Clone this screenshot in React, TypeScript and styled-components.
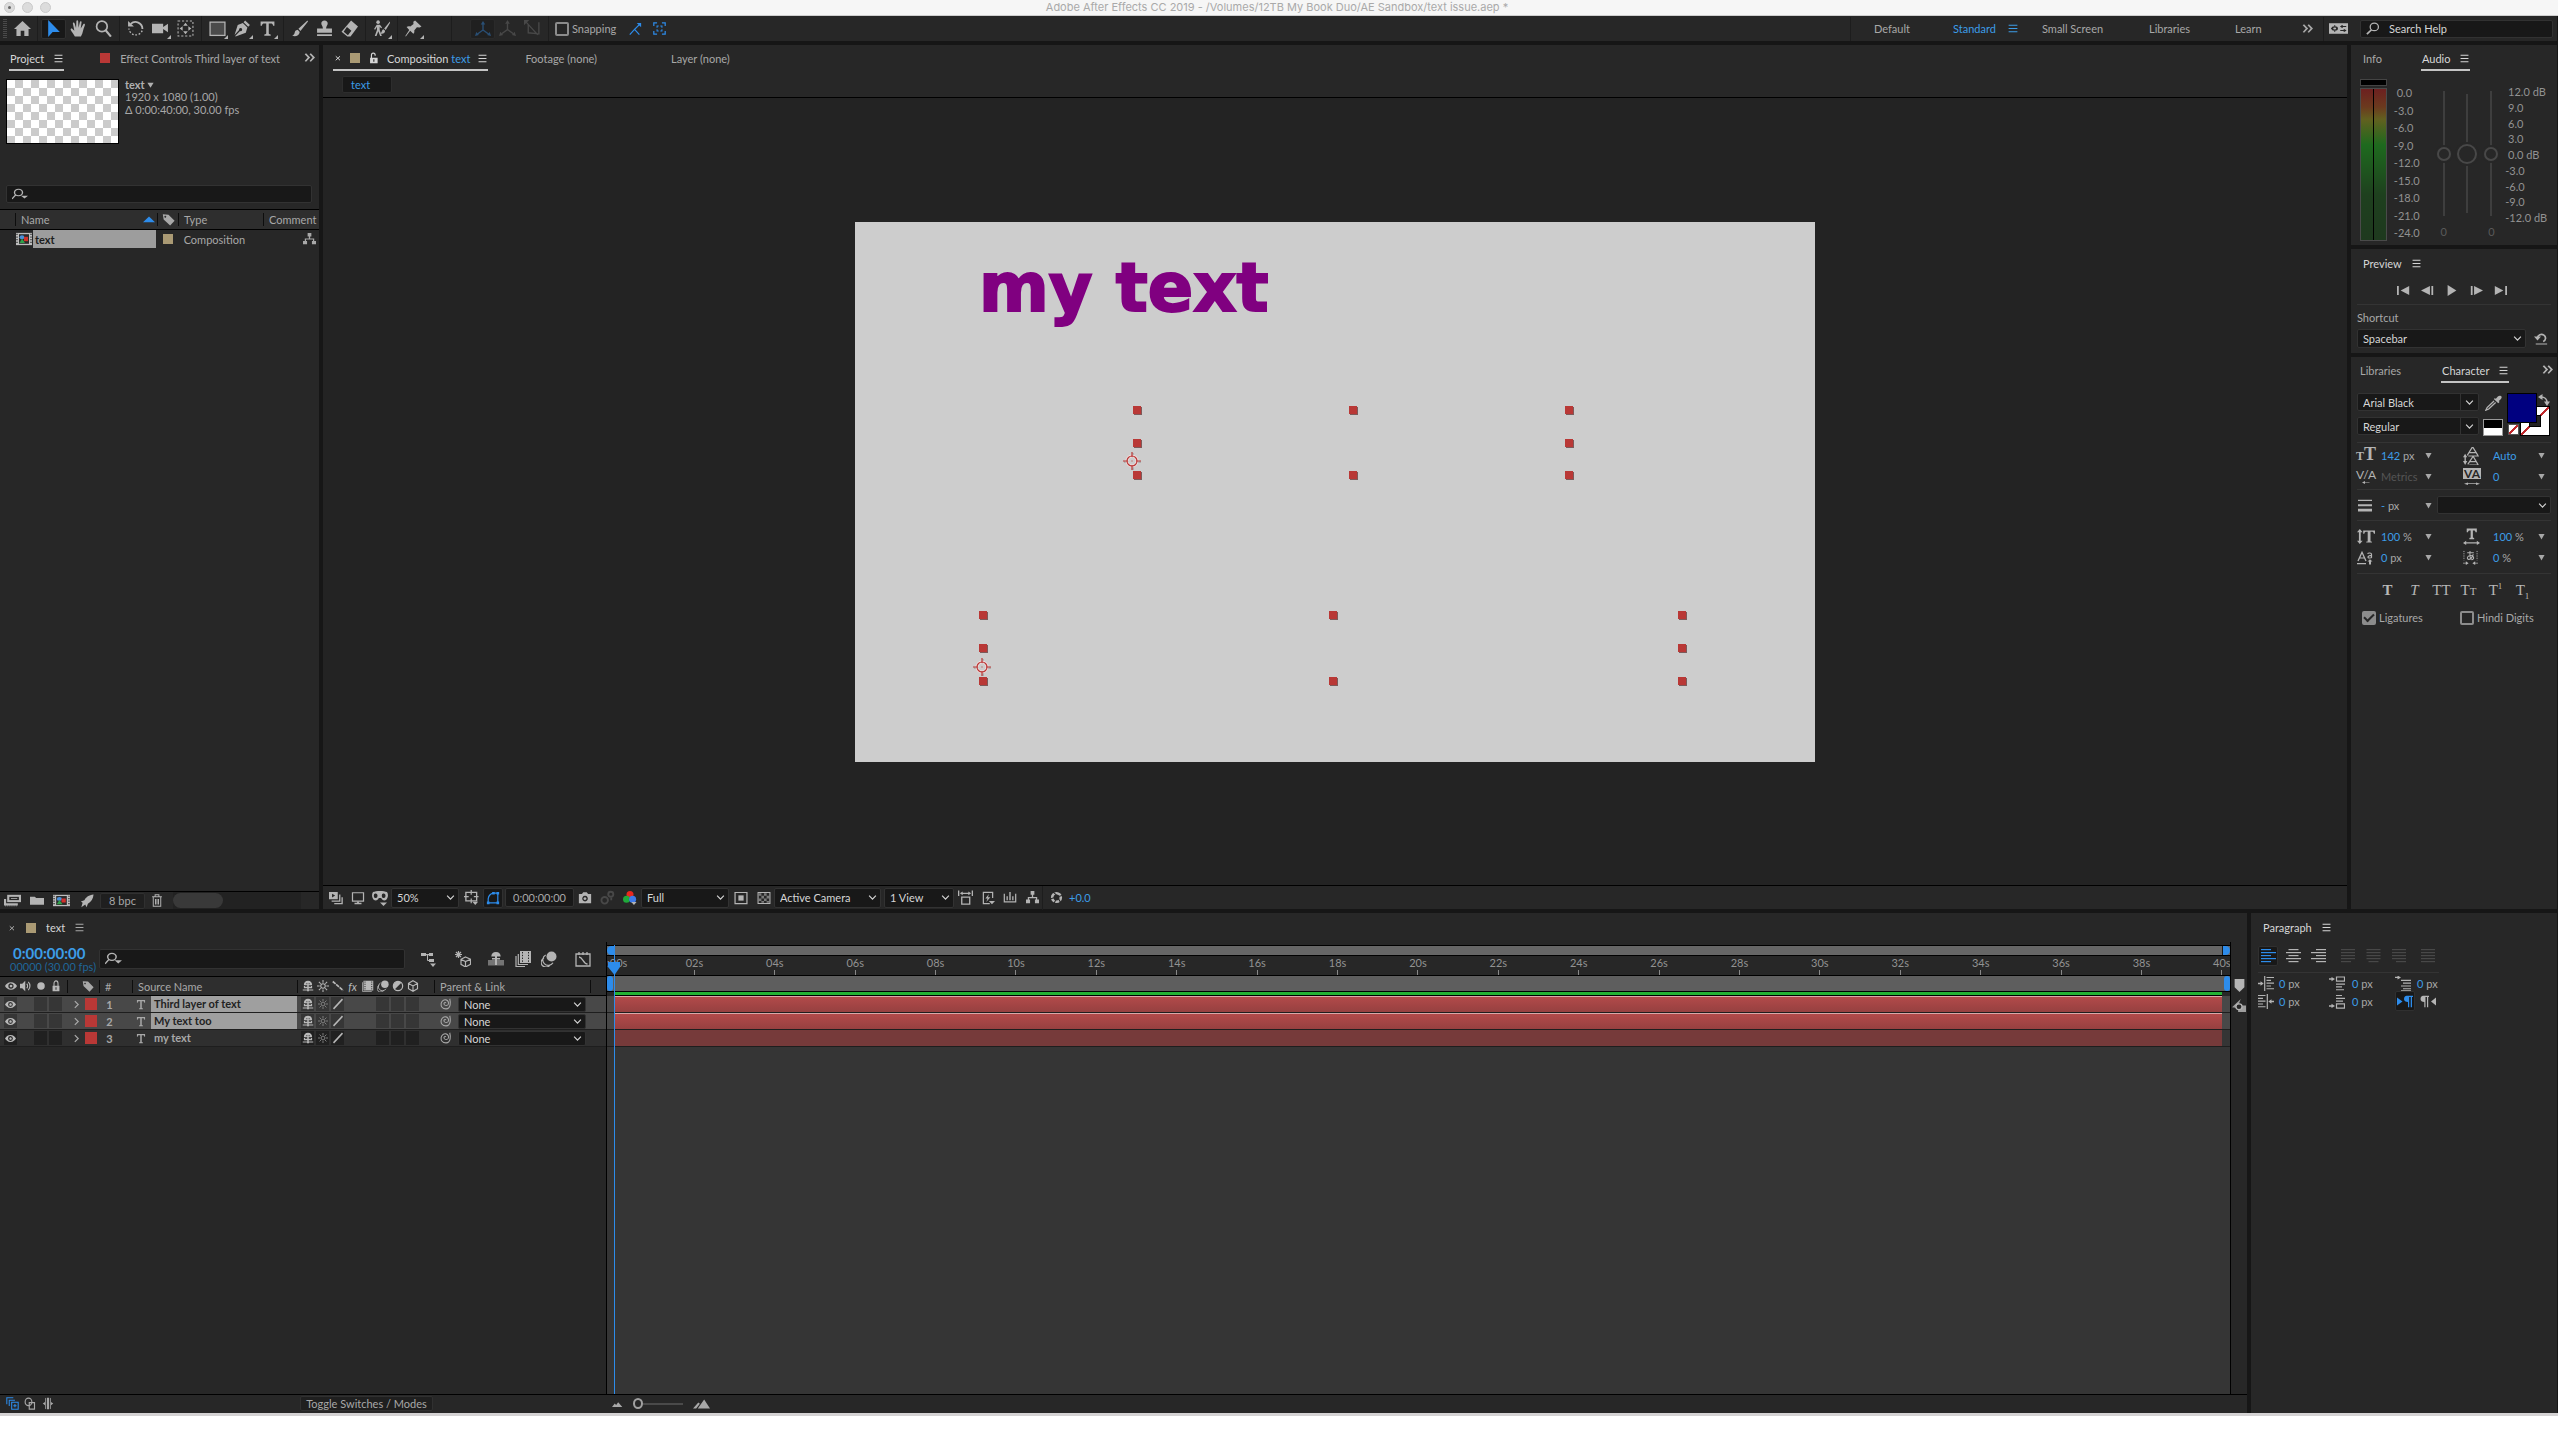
import React, { ReactNode } from 'react';
import styled, { createGlobalStyle, css } from 'styled-components';

/* ---------- tokens ---------- */
const c = {
  panel: '#272727',
  gap: '#161616',
  well: '#181818',
  edge: '#323232',
  text: '#a8a8a8',
  bright: '#d6d6d6',
  blue: '#2d8ceb',
  blueText: '#3c9de8',
  red: '#b93836',
  tan: '#aa9a74',
};

const Global = createGlobalStyle`
  * { box-sizing: border-box; }
  body { margin: 0; background: #fff; }
  button, input, select { font: inherit; color: inherit; margin: 0; padding: 0; border: 0; background: none; }
  body, button, input, select { font-family: Lato, "Liberation Sans", sans-serif; font-size: 11px; line-height: 13px; }
`;

/* ---------- icons, drawn on a 16 unit grid ---------- */
const stroke = { fill: 'none', stroke: 'currentColor' };
const icons: Record<string, ReactNode> = {
  home: <path d="M8 1 0 8.5h2.3V15h4V10h3.4v5h4V8.5H16z" />,
  arrow: <path d="M3 0v16l4.2-4.6H14z" />,
  hand: <path d="M4.6 15.5C3.4 13 1.600 11 .7 9.300c-.5-1 .7-1.800 1.600-.9l1.800 1.800L2.700 3.400c-.2-1.200 1.300-1.500 1.600-.4l1.400 4.600L6 1.200c0-1.200 1.600-1.200 1.700 0l.3 6.200 1.300-5.600c.3-1.100 1.800-.8 1.600.4L10.100 8l2.400-3.900c.7-1 2-.2 1.500.9-1 2.300-1.500 4.400-2.100 6.600-.3 1.500-1.100 2.700-1.600 3.900z" />,
  zoom: <g {...stroke} strokeWidth="1.6"><circle cx="6.5" cy="6" r="5" /><path d="m10 9.600 5 6" strokeWidth="2" /></g>,
  rotate: <g {...stroke} strokeWidth="1.7"><path d="M3.500 3.700A6.500 6.500 0 0 1 14.500 8.500" /><path d="M14.300 10A6.500 6.500 0 0 1 1.800 8" strokeDasharray="1.6 1.6" strokeWidth="1.3" /><path d="M1 1v5h5.500z" fill="currentColor" stroke="none" /></g>,
  camera: <path d="M0 3.500h10.500v3L15 3.500v8l-4.500-3v4H0z" />,
  behind: <g><rect x="1" y="1" width="14" height="14" {...stroke} strokeDasharray="2 1.7" /><path d="M8 2.500 5.800 5.300h4.400zM8 13.500l-2.200-2.800h4.400zM2.500 8l2.800-2.200v4.400zM13.500 8l-2.800-2.200v4.400z" /></g>,
  rect: <rect x="1" y="2" width="14" height="12.5" fill="#4b4b4b" stroke="currentColor" strokeWidth="1.2" />,
  pen: <path d="m10.500.5 4.500 4.300-1.600 1.500L9 2zM8.300 2.900l4.300 4.200-1.500 5L1.500 15.500l-.4-.4 4.600-4.700a1.500 1.500 0 1 0-.9-.9L.5 14l3-9.200z" />,
  type: <path d="M1.500 1.500h13v4h-1.200c-.3-1.700-.8-2.200-2.500-2.200H9.200v9c0 1 .4 1.300 1.800 1.300v1.200H5v-1.200c1.400 0 1.800-.3 1.800-1.300v-9H5.200c-1.700 0-2.200.5-2.500 2.200H1.500z" />,
  brush: <path d="M15.500.5 7 8.300l1.900 2L16 1.500zM6.300 9.200c-2 .2-2.600 1.600-2.900 3-.2 1.100-.9 2-2.400 2.500 2.600 1.100 6.600.6 7.200-3.500z" />,
  stamp: <path d="M8 .5c-2 0-3 1.300-3 2.800 0 1.600 1.500 2.400 1.500 4.700H1v4h14V8H9.500c0-2.300 1.500-3.100 1.500-4.700C11 1.800 10 .5 8 .5zM1 13.500h14V15H1z" />,
  eraser: <path d="M9.500.5 16 6l-7 9.500H6L.5 11zM2.500 11l4 3.300L9.800 10 5.600 6.700z" fillRule="evenodd" />,
  roto: <g><circle cx="4.8" cy="2" r="1.7" /><path d="M1 8.500 3.500 4.500h3L8.500 7l-.8.8L6.300 6.300v3l2 5.700H6.700L5 10.500 3.300 15H1.700l2-5.700v-3L2 9.200zM16 1.500 10.500 8l1.500 1.400 4.300-7zM9.700 8.700c-1.600.5-1 2.800-2.700 4 2 .6 4.400 0 4.400-2.500z" /></g>,
  pin: <path d="m9.500.5 6 5.700-1.700.8-2.600-.2-2.500 3c.3 1.300 0 2.400-.9 3.200L4.900 10.200.8 15.500l-.5-.5L4 9.300 1.500 6.700c.9-.8 2.300-1 3.500-.5l3-2.500-.2-2z" />,
  axis: <g {...stroke} strokeWidth="1.3"><path d="M8 3v6L2.500 13M8 9l5.500 4" /><path d="M8 0 5.800 3.500h4.400zM0 15l1.300-4 2.500 3zM16 15l-1.300-4-2.500 3z" fill="currentColor" stroke="none" /></g>,
  viewAxis: <g {...stroke} strokeWidth="1.3"><path d="M2 2l11 12M14 2v11L4 12V4" /><path d="M0 0h5L0 5z" fill="currentColor" stroke="none" /></g>,
  snapArrow: <g {...stroke} strokeWidth="1.4"><path d="M2 14.500 7.500 8.500l5.500 6M7.500 8.500 14 2" /><path d="M10 1h5v5z" fill="currentColor" stroke="none" /></g>,
  snapBox: <g {...stroke} strokeWidth="1.5"><path d="M1 5V1h4M11 1h4v4M15 11v4h-4M5 15H1v-4" /><path d="M5 7V5h2M9 5h2v2M11 9v2H9M7 11H5V9" strokeWidth="1.3" /></g>,
  more: <path d="m1 2 2-1.500L9 8l-6 7.500L1 14l4.500-6zM8 2l2-1.500L16 8l-6 7.500L8 14l4.500-6z" />,
  menu: <path d="M1 1.500h14v1.700H1zM1 7.200h14v1.700H1zM1 13h14v1.700H1z" />,
  close: <path d="M3.500 4.500 12 12.500M12 4.500 3.500 12.500" {...stroke} strokeWidth="2" />,
  unlock: <g><path d="M5 8V4.200a2.700 2.700 0 0 1 5.400 0V5" {...stroke} strokeWidth="1.7" /><path d="M3 7.500h11V15H3zm4.700 2v3.500h1.600V9.500z" fillRule="evenodd" /></g>,
  lock: <g><path d="M4.800 8V4.500a3.200 3.200 0 0 1 6.400 0V8" {...stroke} strokeWidth="1.7" /><path d="M2.500 7.500h11V15h-11zm4.700 2v3.500h1.600V9.500z" fillRule="evenodd" /></g>,
  search: <g {...stroke} strokeWidth="1.5"><circle cx="9.5" cy="6" r="4.7" /><path d="M6.300 9.500 1 15" strokeWidth="2" /></g>,
  searchMenu: <g {...stroke} strokeWidth="1.4"><circle cx="6.5" cy="5.5" r="4" /><path d="M3.700 8.500 0 13.500" /><path d="M9 9.500h7L12.500 13z" fill="currentColor" stroke="none" /></g>,
  sortUp: <path d="M0 12 8 3.500 16 12z" fill={c.blue} />,
  tag: <path d="M1 1.500 8 2l7.500 7.500L10 15.500 2 8zm3 2a1.100 1.100 0 1 0 .1 0z" fillRule="evenodd" />,
  flow: <path d="M5.700 0h4.600v4.700H8.800v2.600h5v3.200H16V15h-5v-4.500h1.300V8.800H3.700v1.700H5V15H0v-4.500h2.200V7.300h5V4.700H5.700z" />,
  compItem: <g><path d="M0 1h16v14H0z" fill="#bdbdbd" /><path d="M3 2.500h10v11H3z" fill="#2a2a2a" /><path d="M1 2v12M15 2v12" stroke="#333" strokeWidth="1.3" strokeDasharray="1.5 1.5" /><circle cx="6" cy="6" r="2.4" fill="#4a90d9" /><path d="M8 5.500h4v5H8z" fill="#d0322c" /><path d="m6 7.500 3 5H3.500z" fill="#31a04a" /></g>,
  footageItem: <g><path d="M3 1h13v9H3z" /><path d="M5 3.500h9v4H5z" fill="#272727" /><path d="M6.500 5h6v1h-6z" /><path d="M0 6h2v5.500h11V14H0z" /><path d="M1 14.500h11" stroke="currentColor" strokeDasharray="1 1" /></g>,
  folder: <path d="M0 2.500h5.500l1.500 2h9V14H0z" />,
  rocket: <path d="M15.500.5C10 1 7 3.500 5 7L1 8.500l2 1.500-1.500 5L6 12l1.500 3L9 11c4-2.500 6-5.500 6.500-10.500zM3 13l-1.700 2.500" />,
  trash: <g {...stroke} strokeWidth="1.3"><path d="M1.500 3.500h13M5.500 3V1h5v2M3 4v11h10V4M6 6v7M8 6v7M10 6v7" /></g>,
  alwaysPreview: <g><path d="M0 1h10v8.500H0zm3.500 2v4.500L7 5.200z" fillRule="evenodd" /><path d="M12.300 4v7.500H3M15 7v7.500H6" {...stroke} strokeWidth="1.5" /></g>,
  monitor: <g><path d="M1.700 2h12.600v9.500H1.700z" {...stroke} strokeWidth="1.4" /><path d="M7 12h2v1.500h3V15H4v-1.500h3z" /></g>,
  goggles: <g><path d="M1 2c3-1.500 11-1.500 14 0 1.500 2 1.300 6-1 8-2 1.200-4 0-4.800-2H6.800C6 10 4 11.200 2 10-.3 8-.5 4 1 2zm3 1.500A1.900 2.300 0 1 0 4.100 8 1.900 2.300 0 0 0 4 3.500zm8 0A1.900 2.300 0 1 0 12.100 8 1.900 2.300 0 0 0 12 3.500z" fillRule="evenodd" /><path d="M8 12.500h7L11.500 16z" /></g>,
  roi: <g><path d="M2 2.500h11.500v9H2z" {...stroke} strokeWidth="1.4" /><path d="M7.700 0v5M7.700 9v5M0 7h5M10.500 7h5" {...stroke} strokeWidth="1.3" /><path d="M9 12.500h6L12 16z" /></g>,
  mask: <g><path d="M2.500 13.500V9C3 5 5.500 3 8.500 2.500h5v11z" {...stroke} strokeWidth="1.4" /><path d="M12 1h3v3h-3zM12 12h3v3h-3zM1 12h3v3H1zM7 1h3v3H7z" /></g>,
  snapshot: <path d="M1 3.500h3.500L6 1.500h4l1.500 2H15V14H1zm7 2a3.200 3.200 0 1 0 .1 0zm0 1.500a1.700 1.700 0 1 1-.1 0z" fillRule="evenodd" />,
  showSnap: <g {...stroke} strokeWidth="2"><circle cx="5" cy="11" r="3.5" /><circle cx="11.5" cy="4.5" r="2.7" /><path d="M12 8v3" /></g>,
  rgb: <g><circle cx="8" cy="4" r="4" fill="#e8281e" /><circle cx="4" cy="9.5" r="4" fill="#1fa93a" /><circle cx="11" cy="9.5" r="4" fill="#3f7bea" /><path d="M9.500 12.500h6L12.500 16z" /></g>,
  roiBox: <g><path d="M1.200 1.700h13.600v12.600H1.200z" {...stroke} strokeWidth="1.4" /><path d="M5 5h6v6H5z" /></g>,
  grid: <g><path d="M1.200 1.700h13.600v12.600H1.200z" {...stroke} strokeWidth="1.2" /><path d="M2 2.500h3v3H2zM8 2.500h3v3H8zM5 5.500h3v3H5zM11 5.500h3v3h-3zM2 8.500h3v3H2zM8 8.500h3v3H8zM5 11.500h3v2H5zM11 11.500h3v2h-3z" opacity=".6" /></g>,
  pixelAspect: <g><path d="M4 7.500h8.500V15H4z" {...stroke} strokeWidth="1.4" /><path d="M0 .5h1.400v6H0zM14.600.5H16v6h-1.400zM2 3.500 5 1.500v1.300h6V1.500l3 2-3 2V4.200H5v1.300z" /></g>,
  fastPreview: <g><path d="M10 14.500H2.700v-13h10.600V8" {...stroke} strokeWidth="1.4" /><path d="m9 3.500-4 5h2.500L6 12.500l4.700-5.400H8z" /><path d="M9 11.500h7L12.500 15z" /></g>,
  timelineBtn: <g><path d="M1.500 3v9.500h13V3" {...stroke} strokeWidth="1.4" /><path d="M4 6h1.500v4.500H4zM7.200 1h1.600v9.500H7.200zM10.500 6H12v4.500h-1.500z" /></g>,
  aperture: <g><circle cx="8" cy="8" r="5.3" {...stroke} strokeWidth="3.2" /><path d="M4 1.500 8 5M14.800 5.500 9.500 7M13 14l-2.500-4.500M5 15l2-4M1 9.500l5-1.500" stroke="#272727" strokeWidth="1.3" /></g>,
  workspace: <g><path d="M0 1.500h16v13H0z" /><circle cx="4.8" cy="8" r="2" fill="none" stroke="#272727" strokeWidth="1.5" /><path d="M4.800 4v8M1.800 8h6" stroke="#272727" strokeDasharray="1.5 5" /><path d="M9.500 5.500h5M9.500 10.500h5M11 4v3M13 9v3" stroke="#272727" strokeWidth="1.4" /></g>,
  compFlow: <g><path d="M0 2h5v3H0zM8 2h4v3H8zM8 8h5v3H8zM5 3h3v1.300H5z" /><path d="M6.500 4v5.500H8" {...stroke} /><path d="M9 12.500h6L12 16z" /></g>,
  draft3d: <g {...stroke} strokeWidth="1.2"><path d="m10.500 6 5 2.300v5L10.500 16 6 13.300v-5zM6 8.300l4.500 2.200L15.500 8.300M10.500 10.500V16" /><path d="M3.500 0v7M0 3.500h7M1 1l5 5M6 1 1 6" /></g>,
  shy: <g><path d="M0 9h16v5.500H0z" opacity=".55" /><path d="M8 1C5 1 3.300 2.800 3.300 5.500H7V14h2V5.500h3.700C12.700 2.800 11 1 8 1zM4 8.500h8V7H4z" /></g>,
  frameBlend: <g><path d="M5 0h11v12H5z" /><path d="M7.500 1v10M13.500 1v10" stroke="#272727" strokeDasharray="1.4 1.4" /><path d="M3.300 3v10.500H13M1 5v10.500h9" {...stroke} strokeWidth="1.2" /></g>,
  motionBlur: <g><circle cx="10.5" cy="5.5" r="5" /><path d="M4.700 4A5.500 5.500 0 1 0 12 11.700M3 7a4.800 4.800 0 1 0 6 7" {...stroke} strokeWidth="1.2" /></g>,
  graph: <g {...stroke} strokeWidth="1.3"><path d="M1 3h14v12H1zM4 6c4 0 4 7 8.500 7M4 1v3M8 1v3M12 1v3" /></g>,
  eye: <path d="M8 3C4 3 1.500 5.500 0 8c1.500 2.500 4 5 8 5s6.500-2.500 8-5c-1.500-2.500-4-5-8-5zm0 1.500A3.500 3.500 0 1 1 7.900 11.500 3.500 3.500 0 0 1 8 4.500zm0 1.700a1.800 1.800 0 1 0 .1 0z" fillRule="evenodd" />,
  speaker: <g><path d="M0 5h3l4-4v14l-4-4H0z" /><path d="M9 5c1.500 1.500 1.500 4.500 0 6M11 2.500c3 3 3 8 0 11" {...stroke} strokeWidth="1.5" /></g>,
  dot: <circle cx="8" cy="8" r="5" />,
  shySm: <path d="M8 1C4.500 1 2.500 3 2.500 7H7v2H4v-1H2.500v3H7v1.500H1V14h5.500l1.500 1.500L9.500 14H15v-1.500H9V11h4.500V8H12v1H9V7h4.500C13.500 3 11.500 1 8 1zM6 4h1v1.500H6zM9 4h1v1.500H9z" fillRule="evenodd" />,
  sun: <g {...stroke} strokeWidth="1.4"><circle cx="8" cy="8" r="3" /><path d="M8 0v3.500M8 12.500V16M0 8h3.500M12.500 8H16M2.500 2.500 5 5M11 11l2.500 2.500M13.500 2.500 11 5M5 11l-2.500 2.500" /></g>,
  quality: <path d="M1 2 15 14" {...stroke} strokeWidth="2.2" strokeDasharray="5 1" />,
  slash: <path d="M2 14.500 14 1.500" {...stroke} strokeWidth="2" />,
  film: <g><path d="M2 1h13v13H2z" /><path d="M4 2v11M13 2v11" stroke="#2e2e2e" strokeWidth="1.3" strokeDasharray="1.5 1.5" /><path d="M.7 3v12.300H13" {...stroke} /></g>,
  adjust: <g><circle cx="8" cy="8" r="6.2" {...stroke} strokeWidth="1.6" /><path d="M12.500 3.500A6.200 6.200 0 0 0 3.500 12.500z" /></g>,
  cube: <path d="m8 1 6 3.500v7L8 15l-6-3.500v-7zM2 4.500 8 8l6-3.500M8 8v7" {...stroke} strokeWidth="1.5" />,
  chevron: <path d="m5 2 6 6-6 6" {...stroke} strokeWidth="2.2" />,
  down: <path d="m2 4.500 6 6.500 6-6.500" {...stroke} strokeWidth="2" />,
  triDown: <path d="M1 2h14L8 15z" />,
  spiral: <path d="M13 1c1 4 2 13-5 13.500C3 14.500 1 11 1.500 7.500 2 4 5 2 8 2.500s4 4 3 6-4.500 2-5.500 0S7 5.500 8 6.500" {...stroke} strokeWidth="1.4" />,
  first: <path d="M0 1.500h2.200v13H0zM15 1.500v13L4.500 8z" />,
  prev: <path d="M11 1.500v13L0 8zM12.800 1.500H15v13h-2.200z" />,
  play: <path d="M1 0v16L15 8z" />,
  next: <path d="M1 1.500h2.200v13H1zM5 1.500v13L16 8z" />,
  last: <path d="M1 1.500v13L11.500 8zM13.800 1.500H16v13h-2.200z" />,
  reset: <g><path d="M4 7a4.600 4.600 0 1 1 6.500 4.700" {...stroke} strokeWidth="2" /><path d="M0 5.500h8L4 10.500zM2 14h13v1.500H2z" /></g>,
  dropper: <g><path d="M10 4c2-3 3.500-4 5-3s.5 3-2 5l.7 1-1.200 1.200L8.300 4 9.500 3z" /><path d="M8.500 6 2 12.500.8 15.200 3.500 14 10 7.500" {...stroke} strokeWidth="1.2" /></g>,
  swap: <g><path d="M4 4c5 0 8 3 8 7" {...stroke} strokeWidth="2.2" /><path d="M6 0v8L0 4zM8 10h8l-4 6z" /></g>,
  leading: <g><path d="M4 7.500 8.500.5h1L14 7.500M6 5h6M5 8h10M4.500 15.500 9 9h1l4 6.500M6.500 13H12M6 16h9" {...stroke} strokeWidth="1.1" /><path d="M2 6 0 9h1.400v3.500H0L2 16l2-3.500H2.700V9H4z" /></g>,
  arrowsH: <g><path d="M3.500.5h9.500v3.500h-1.200c-.2-1.200-.5-1.700-1.600-1.700H9.300v6.200c0 .6.300.8 1.200.8v1.200H6V9.300c.9 0 1.200-.2 1.200-.8V2.300h-.9c-1.100 0-1.400.5-1.600 1.700H3.500z" /><path d="M0 14 3 12v1.300h10V12l3 2-3 2v-1.300H3V16z" /></g>,
  arrowH: <path d="M0 12.500 4 9v2.500h8V9l4 3.500L12 16v-2.500H4V16z" />,
  arrowL: <path d="M0 8 6 3.500V7h9v2H6v3.500z" />,
  strokeW: <path d="M1 1h14v1.500H1zM1 6.500h14V9H1zM1 12h14v3.500H1z" />,
  vscale: <path d="M2.500 0 0 3.500h1.700v9H0L2.500 16 5 12.500H3.300v-9H5zM5.500 1.500H16V5h-1c-.2-1.500-.7-2-2-2h-1v9.300c0 .9.300 1.200 1.300 1.200v1H8.200v-1c1 0 1.300-.3 1.300-1.200V3h-1c-1.300 0-1.800.5-2 2h-1z" />,
  baseline: <g><path d="m1 11.500 4-10 4 10M2.500 8h5M0 14.500h9" {...stroke} strokeWidth="1.3" /><path d="M10.500 3c1-1 4-1 4 .8v4M14.500 5c-4 0-4.500 3-2 3 1 0 2-.7 2-1" {...stroke} strokeWidth="1.2" /><path d="M13 9.500 10.500 12H12v3.500h2V12h1.500z" /></g>,
  tsume: <g><path d="M1 1v10M15 1v10" {...stroke} strokeDasharray="1.2 1.2" /><path d="M4.500 3h7M7.500 1c-.3 4 0 7 1 9M11 4.500c-1 3-3 5.500-5 5.500S4 6 8 5.800s4.500 4 1 4.700" {...stroke} strokeWidth="1.1" /><path d="M0 13.500h3V12l3 2-3 2v-1.500H0zM16 13.500h-3V12l-3 2 3 2v-1.500h3z" /></g>,
  marker: <path d="M2 1h12v9.500L8 16l-6-5.500z" />,
  compMarker: <g><path d="M7 8h9v8H7zM10 0 0 10l6 1z" opacity=".85" /><circle cx="8" cy="9.5" r="3.5" fill="#272727" stroke="currentColor" strokeWidth="1.5" /></g>,
  indentL: <g><path d="M6.700 0v16" {...stroke} strokeWidth="1.2" /><path d="M8.500 1H16v1.200H8.500zM8.500 4H13v1.200H8.500zM8.500 7H16v1.200H8.500zM8.500 10H13v1.200H8.500zM8.500 13H16v1.200H8.500zM0 7.300h2.500V5.500L5.700 8 2.500 10.500V8.700H0z" /></g>,
  indentR: <g><path d="M9.300 0v16" {...stroke} strokeWidth="1.2" /><path d="M0 1h7.500v1.200H0zM0 4h5v1.200H0zM0 7h7.500v1.200H0zM0 10h5v1.200H0zM0 13h7.500v1.200H0zM16 7.300h-2.500V5.500L10.300 8l3.200 2.500V8.700H16z" /></g>,
  spaceBefore: <g><path d="M7.500 1h8v4.500h-8z" {...stroke} strokeWidth="1.2" /><path d="M7 8h9v1.200H7zM7 11h6v1.200H7zM7 14h8v1.200H7zM0 2.500h2.500V1L6 3.200 2.500 5.500V4H0z" /></g>,
  spaceAfter: <g><path d="M7.500 10.500h8V15h-8z" {...stroke} strokeWidth="1.2" /><path d="M7 1h6v1.200H7zM7 4h9v1.200H7zM7 7h7v1.200H7zM0 12h2.500v-1.500L6 12.800 2.500 15v-1.500H0z" /></g>,
  firstLine: <path d="M6 4h10v1.200H6zM8 7h8v1.200H8zM6 10h10v1.200H6zM8 13h8v1.200H8zM6 15.300h10v.7H6zM0 .8h2.500V-.5L6 1.500 2.500 3.700V2.200H0z" />,
  ltr: <path d="M0 3v10l5.500-5zM9.500 1H16v1.500h-1V15h-1.300V2.500h-1.500V15H11V8.500C8.500 8.500 7 7 7 4.800S8.500 1 9.500 1z" />,
  rtl: <path d="M16 3v10l-5-5zM3 1h6v1.500H8.200V15H7V2.500H5.500V15H4.300V8.500C2 8.500.5 7 .5 4.800S2 1 3 1z" />,
  layers: <g {...stroke} strokeWidth="1.3"><path d="M1 9V1h8M4 11V4h7M7 6.500h8V15H7zM9 10.700h4M11 8.700v4" /></g>,
  modes: <g {...stroke} strokeWidth="1.5"><circle cx="6" cy="6" r="4.5" /><path d="M7 7h7v8H7z" /></g>,
  braces: <path d="M5 1v14l-1-.5V10L1 8l3-2V1.500zM6.500 1h3v14h-3zM11 1v14l1-.5V10l3-2-3-2V1.500z" />,
  mountainSm: <path d="m0 13 4-5 2 2 3-4 6 7z" />,
  mountainLg: <path d="m0 14 5-8 1.500 1.500L3 14zM4.500 14 10.500 2 16 14z" />,
};

const Icon = ({ name, w = 16, h }: { name: string; w?: number; h?: number }) => (
  <svg width={w} height={h ?? w} viewBox="0 0 16 16" fill="currentColor" preserveAspectRatio="none" aria-hidden="true" style={{ display: 'block', flex: 'none' }}>
    {icons[name]}
  </svg>
);

/* ---------- shared parts ---------- */
const Shell = styled.div`
  display: flex; flex-direction: column; height: 100vh; min-height: 900px; padding-bottom: 18px;
  background: #fff; color: ${c.text};
`;
const Frame = styled.div`
  flex: 1; display: flex; flex-direction: column; min-height: 0; gap: 4px;
  background: ${c.gap}; border-bottom: 3px solid #d4d2d3; padding-right: 1px;
`;
const Upper = styled.main`
  flex: 864 1 0; min-height: 0; display: grid; grid-template-columns: 319px 1fr 206px; column-gap: 4px;
`;
const Lower = styled.section`
  flex: 500 1 0; min-height: 0; display: grid; grid-template-columns: 1fr 306px; column-gap: 4px;
`;
const Panel = styled.section`
  display: flex; flex-direction: column; min-width: 0; min-height: 0; background: ${c.panel};
`;
const Row = styled.div<{ $gap?: number }>`
  display: flex; align-items: center; gap: ${p => p.$gap ?? 0}px;
`;
const Spacer = styled.div`flex: 1;`;
const Cell = styled.div<{ $w: number; $start?: boolean }>`
  flex: none; display: flex; align-items: center; justify-content: ${p => (p.$start ? 'flex-start' : 'center')};
  width: ${p => p.$w}px;
`;
const Tabs = styled.div<{ $pad: number }>`
  flex: none; display: flex; align-items: stretch; height: 26px; padding: 0 4px 0 ${p => p.$pad}px;
`;
const Tab = styled.button<{ $on?: boolean; $gap?: number }>`
  display: flex; align-items: center; gap: ${p => p.$gap ?? 10}px; white-space: nowrap;
  padding: 2px 1px 0; border-bottom: 2px solid ${p => (p.$on ? '#c4c4c4' : 'transparent')};
  color: ${p => (p.$on ? c.bright : c.text)};
`;
const Overflow = styled.button`color: #b4b4b4; padding-bottom: 2px;`;
const Blue = styled.span`color: ${c.blueText};`;
const Swatch = styled.span<{ $c: string; $s?: number }>`
  flex: none; width: ${p => p.$s ?? 10}px; height: ${p => p.$s ?? 10}px; background: ${p => p.$c};
`;
const IconButton = styled.button<{ $w?: number; $on?: boolean; $dim?: boolean }>`
  position: relative; flex: none; display: flex; align-items: center; justify-content: center;
  width: ${p => p.$w ?? 25}px; height: 20px;
  color: ${p => (p.$dim ? '#484848' : p.$on ? c.blue : '#b4b4b4')};
  ${p => p.$on && css`background: ${c.well}; border: 1px solid #303030; border-radius: 2px;`}
`;
const Fly = styled.i`
  position: absolute; right: 2px; bottom: 0; width: 0; height: 0;
  border-left: 4px solid transparent; border-bottom: 4px solid #b4b4b4;
`;
const SearchBox = styled.label<{ $h?: number }>`
  display: flex; align-items: center; gap: 9px; height: ${p => p.$h ?? 18}px; padding: 0 5px;
  background: ${c.well}; border: 1px solid ${c.edge}; border-radius: 2px; color: #b4b4b4;
  input { flex: 1; min-width: 0; outline: 0; color: ${c.bright}; }
  input::placeholder { color: ${c.bright}; opacity: 1; }
`;
const SelectWrap = styled.span<{ $w?: number; $h?: number; $split?: boolean }>`
  flex: none; display: grid; align-items: center; width: ${p => (p.$w ? `${p.$w}px` : '100%')}; height: ${p => p.$h ?? 18}px;
  background: ${c.well}; border: 1px solid ${c.edge}; border-radius: 2px; color: ${c.bright};
  select { grid-area: 1 / 1; width: 100%; height: 100%; padding: 0 18px 0 5px; appearance: none; outline: 0; }
  > span {
    grid-area: 1 / 1; justify-self: end; display: flex; align-items: center; height: 100%; padding: 0 ${p => (p.$split ? 4 : 3)}px;
    pointer-events: none; border-left: ${p => (p.$split ? `1px solid ${c.edge}` : '0')};
  }
`;
const Select = ({ label, value, ...rest }: { label: string; value: string; $w?: number; $h?: number; $split?: boolean }) => (
  <SelectWrap {...rest}>
    <select aria-label={label} defaultValue={value}><option>{value}</option></select>
    <span><Icon name="down" w={9} /></span>
  </SelectWrap>
);
const Check = styled.label`
  display: flex; align-items: center; gap: 3px;
  input {
    appearance: none; width: 14px; height: 14px; border: 2px solid #8c8c8c; border-radius: 2px; display: grid; place-items: center;
  }
  input:checked { background: #8c8c8c; }
  input:checked::after {
    content: ''; width: 8px; height: 4px; border: solid ${c.panel}; border-width: 0 0 2px 2px; transform: rotate(-45deg) translate(1px, -1px);
  }
`;

/* ---------- window title ---------- */
const TitleBar = styled.header`
  flex: none; display: grid; grid-template-columns: 1fr auto 1fr; align-items: center; height: 16px; padding: 0 8px 0 4px;
  background: #f6f6f6; border-bottom: 1px solid #cfcfcf; color: #a9a9a9;
  h1 { margin: 0; font: 400 11px/15px Inter, "Liberation Sans", sans-serif; }
`;
const Light = styled.button`
  width: 11px; height: 11px; border-radius: 50%; background: #dcdcdc; border: 1px solid #cacaca; display: grid; place-items: center;
  i { width: 3px; height: 3px; border-radius: 50%; background: #666; }
`;

/* ---------- toolbar ---------- */
const Toolbar = styled.nav`
  flex: none; display: flex; align-items: center; height: 25px; background: ${c.panel}; padding-right: 4px;
`;
const ToolGroup = styled.div<{ $w?: number; $pad?: number; $last?: boolean }>`
  flex: none; display: flex; align-items: center; height: 25px; padding: 0 3px 0 ${p => p.$pad ?? 3}px;
  width: ${p => (p.$w ? `${p.$w}px` : 'auto')}; border-right: ${p => (p.$last ? '0' : '1px solid #1d1d1d')};
`;
const Divider = styled.i`flex: none; width: 1px; height: 24px; background: #1d1d1d;`;
const Grip = styled.i`
  flex: none; width: 4px; height: 20px; background: repeating-linear-gradient(#4a4a4a 0 1px, transparent 1px 2px);
`;
const Workspace = styled.button<{ $w: number; $on?: boolean }>`
  flex: none; display: flex; align-items: center; gap: 12px; width: ${p => p.$w}px; text-align: left; white-space: nowrap;
  color: ${p => (p.$on ? c.blueText : c.text)};
`;

const Tool = ({ name, label, fly, ...r }: { name: string; label: string; fly?: boolean; $on?: boolean; $dim?: boolean; $w?: number }) => (
  <IconButton aria-label={label} {...r}><Icon name={name} w={17} />{fly && <Fly />}</IconButton>
);

const MainToolbar = () => (
  <Toolbar>
    <ToolGroup $w={38}><Grip /><Tool name="home" label="Home" $w={30} /></ToolGroup>
    <ToolGroup>
      <Tool name="arrow" label="Selection" $on /><Tool name="hand" label="Hand" /><Tool name="zoom" label="Zoom" />
    </ToolGroup>
    <ToolGroup>
      <Tool name="rotate" label="Rotate" /><Tool name="camera" label="Camera" fly /><Tool name="behind" label="Pan behind" />
    </ToolGroup>
    <ToolGroup>
      <Tool name="rect" label="Rectangle" fly /><Tool name="pen" label="Pen" fly /><Tool name="type" label="Type" fly />
    </ToolGroup>
    <ToolGroup>
      <Tool name="brush" label="Brush" /><Tool name="stamp" label="Clone stamp" /><Tool name="eraser" label="Eraser" />
    </ToolGroup>
    <ToolGroup><Tool name="roto" label="Roto brush" fly /></ToolGroup>
    <ToolGroup $w={54}><Tool name="pin" label="Puppet pin" fly /></ToolGroup>
    <ToolGroup $w={97} $pad={18}>
      <IconButton $on aria-label="Local axis" style={{ opacity: 0.4 }}><Icon name="axis" w={16} /></IconButton>
      <Tool name="axis" label="World axis" $dim /><Tool name="viewAxis" label="View axis" $dim />
    </ToolGroup>
    <ToolGroup $last $pad={6}>
      <Check><input type="checkbox" />Snapping</Check>
      <Cell $w={6} />
      <Row style={{ color: c.blue }}>
        <Cell $w={25}><Icon name="snapArrow" w={14} /></Cell><Cell $w={25}><Icon name="snapBox" w={13} /></Cell>
      </Row>
    </ToolGroup>
    <Spacer />
    <Divider />
    <Cell $w={23} />
    <Workspace $w={79}>Default</Workspace>
    <Workspace $w={89} $on>Standard<Icon name="menu" w={10} h={9} /></Workspace>
    <Workspace $w={107}>Small Screen</Workspace>
    <Workspace $w={86}>Libraries</Workspace>
    <Workspace $w={67}>Learn</Workspace>
    <Cell $w={21} $start><Icon name="more" w={11} h={9} /></Cell>
    <Divider />
    <IconButton $w={28} aria-label="Workspace settings"><Icon name="workspace" w={19} h={13} /></IconButton>
    <Cell $w={8} />
    <SearchBox style={{ width: 193 }}><Icon name="search" w={14} h={13} /><input aria-label="Search Help" placeholder="Search Help" /></SearchBox>
  </Toolbar>
);

/* ---------- project panel ---------- */
const Summary = styled.div`
  display: flex; gap: 6px; height: 72px; margin: 8px 6px 0; line-height: 13px;
`;
const Thumb = styled.div`
  width: 113px; height: 65px; border: 1px solid #000;
  background: repeating-conic-gradient(#cbcbcb 0 25%, #fff 0 50%) 0 0 / 16px 16px;
`;
const Strong = styled.b`display: flex; align-items: center; gap: 2px; height: 11px; font-weight: 700; color: #b0b0b0;`;
const DataTable = styled.table`
  width: 100%; border-collapse: collapse; table-layout: fixed; flex: none;
  th, td { padding: 0; font-weight: 400; text-align: left; overflow: hidden; white-space: nowrap; }
  thead tr { height: 20px; background: #2e2e2e; border: solid #000; border-width: 1px 0; }
`;
const Head = styled.div<{ $pad?: number }>`
  display: flex; align-items: center; justify-content: space-between; height: 13px; padding: 0 2px 0 ${p => p.$pad ?? 5}px;
  border-left: 1px solid #0d0d0d;
`;
const NameCell = styled.div`
  flex: 1; display: flex; align-items: center; height: 18px; margin-right: 1px; padding-left: 2px; background: #9d9d9d; color: #1d1d1d; font-weight: 700;
`;
const Footer = styled.footer`
  flex: none; display: flex; align-items: center; height: 18px; border-top: 1px solid #000;
`;
const Button = styled.button<{ $w: number; $h?: number }>`
  flex: none; width: ${p => p.$w}px; height: ${p => p.$h ?? 16}px; background: #1f1f1f; border: 1px solid #303030; border-radius: 2px;
`;
const ScrollTrack = styled.div`
  flex: 1; height: 100%; margin: 0 18px 0 4px; background: #222;
  &::before { content: ''; display: block; width: 50px; height: 15px; margin-top: 1px; border-radius: 8px; background: #393939; }
`;

const ProjectPanel = () => (
  <Panel>
    <Tabs $pad={9}>
      <Tab $on>Project<Icon name="menu" w={9} h={9} /></Tab>
      <Cell $w={35} />
      <Tab><Swatch $c={c.red} />Effect Controls Third layer of text</Tab>
      <Spacer />
      <Overflow aria-label="More panels"><Icon name="more" w={11} h={9} /></Overflow>
    </Tabs>
    <Summary>
      <Thumb />
      <div><Strong>text<Icon name="triDown" w={7} h={6} /></Strong>1920 x 1080 (1.00)<br />Δ 0:00:40:00, 30.00 fps</div>
    </Summary>
    <SearchBox $h={18} style={{ margin: '34px 7px 6px 6px' }}><Icon name="searchMenu" w={16} h={13} /><input aria-label="Search project" /></SearchBox>
    <DataTable>
      <colgroup><col style={{ width: 15 }} /><col style={{ width: 142 }} /><col style={{ width: 21 }} /><col style={{ width: 85 }} /><col /></colgroup>
      <thead>
        <tr>
          <th /><th><Head>Name<Icon name="sortUp" w={12} h={11} /></Head></th>
          <th><Head $pad={4}><Icon name="tag" w={13} h={13} /></Head></th>
          <th><Head>Type</Head></th><th><Head>Comment</Head></th>
        </tr>
      </thead>
      <tbody>
        <tr>
          <td />
          <td><Row><Cell $w={18}><Icon name="compItem" w={16} h={14} /></Cell><NameCell>text</NameCell></Row></td>
          <td><Cell $w={21}><Swatch $c={c.tan} /></Cell></td>
          <td><Cell $w={85} $start>&nbsp; Composition</Cell></td>
          <td><Row style={{ justifyContent: 'flex-end', paddingRight: 3 }}><Icon name="flow" w={13} h={12} /></Row></td>
        </tr>
      </tbody>
    </DataTable>
    <Spacer />
    <Footer>
      <IconButton $w={24} aria-label="Interpret footage"><Icon name="footageItem" w={17} h={13} /></IconButton>
      <IconButton $w={25} aria-label="New folder"><Icon name="folder" w={14} h={11} /></IconButton>
      <IconButton $w={25} aria-label="New composition"><Icon name="compItem" w={17} h={13} /></IconButton>
      <IconButton $w={26} aria-label="Project settings"><Icon name="rocket" w={14} /></IconButton>
      <Button $w={45}>8 bpc</Button>
      <IconButton $w={24} aria-label="Delete"><Icon name="trash" w={12} h={13} /></IconButton>
      <ScrollTrack />
    </Footer>
  </Panel>
);

/* ---------- composition panel ---------- */
const Crumb = styled.div`
  flex: none; display: flex; align-items: center; height: 27px; padding: 0 19px; border-bottom: 1px solid #000;
  button { width: 50px; height: 17px; padding: 0 8px; text-align: left; border-radius: 2px; background: ${c.well}; border: 1px solid #2d2d2d; color: ${c.blueText}; }
`;
const Viewer = styled.div`
  flex: 1; min-height: 0; display: grid; place-items: center; background: #232323; overflow: hidden;
`;
const Artboard = styled.div`
  position: relative; width: 960px; height: 540px; background: #cdcdcd;
`;
const LayerText = styled.p`
  position: absolute; left: 124px; top: 24px; margin: 0; white-space: nowrap;
  font: 700 67px/85px "DejaVu Sans", sans-serif; color: #800080; -webkit-text-stroke: 2px #800080;
`;
const Handle = styled.i`
  position: absolute; width: 8px; height: 8px; background: ${c.red}; box-shadow: 1px 1px 0 #7d5a5a;
`;
const Anchor = styled.svg`position: absolute; width: 20px; height: 20px; margin: -10px 0 0 -10px;`;
const handles = [
  [278, 184], [278, 217], [278, 249], [494, 184], [494, 249], [710, 184], [710, 217], [710, 249],
  [124, 389], [124, 422], [124, 455], [474, 389], [474, 455], [823, 389], [823, 422], [823, 455],
];
const anchors = [[277, 239], [127, 445]];
const ViewFooter = styled(Footer)`
  height: 24px; padding-left: 2px;
`;
const TimeBox = styled.button`
  width: 69px; height: 19px; margin-left: 2px; background: ${c.well}; border: 1px solid ${c.edge}; border-radius: 2px;
`;

const ViewTool = ({ name, w = 22, s = 14, ...r }: { name: string; w?: number; s?: number; $on?: boolean; $dim?: boolean }) => (
  <IconButton $w={w} aria-label={name} {...r}><Icon name={name} w={s} /></IconButton>
);

const CompositionPanel = () => (
  <Panel>
    <Tabs $pad={10}>
      <Tab $on $gap={8}>
        <Icon name="close" w={8} /><Swatch $c={c.tan} /><Icon name="unlock" w={11} h={12} />
        <span>Composition <Blue>text</Blue></span><Icon name="menu" w={9} h={9} />
      </Tab>
      <Cell $w={36} />
      <Tab>Footage (none)</Tab>
      <Cell $w={72} />
      <Tab>Layer (none)</Tab>
    </Tabs>
    <Crumb><button>text</button></Crumb>
    <Viewer>
      <Artboard>
        <LayerText>my text</LayerText>
        {handles.map(([x, y]) => <Handle key={`${x}-${y}`} style={{ left: x, top: y }} />)}
        {anchors.map(([x, y]) => (
          <Anchor key={x} viewBox="0 0 20 20" fill="none" style={{ left: x, top: y }}>
            <path d="M11 2v5M11 14v5M2 11h5M14 11h5" stroke="#8e8e8e" />
            <circle cx="10" cy="10" r="5" stroke="#f0dede" strokeWidth="3" />
            <circle cx="10" cy="10" r="5" stroke={c.red} strokeWidth="1.2" />
            <path d="M10 1v5M10 14v5M1 10h5M14 10h5M9.500 10h1" stroke={c.red} strokeWidth="1.2" />
          </Anchor>
        ))}
      </Artboard>
    </Viewer>
    <ViewFooter>
      <ViewTool name="alwaysPreview" /><ViewTool name="monitor" /><ViewTool name="goggles" s={16} />
      <Select label="Magnification" value="50%" $w={68} $h={20} />
      <ViewTool name="roi" s={15} w={24} /><ViewTool name="mask" $on w={20} />
      <TimeBox>0:00:00:00</TimeBox>
      <ViewTool name="snapshot" /><ViewTool name="showSnap" $dim s={15} /><ViewTool name="rgb" w={23} />
      <Select label="Resolution" value="Full" $w={88} $h={20} />
      <ViewTool name="roiBox" w={24} /><ViewTool name="grid" w={21} />
      <Select label="3D view" value="Active Camera" $w={107} $h={20} />
      <Cell $w={3} />
      <Select label="View layout" value="1 View" $w={70} $h={20} />
      <ViewTool name="pixelAspect" w={23} s={15} /><ViewTool name="fastPreview" w={21} /><ViewTool name="timelineBtn" w={24} />
      <ViewTool name="flow" w={20} s={13} />
      <Divider />
      <ViewTool name="aperture" w={26} s={13} />
      <Blue>+0.0</Blue>
    </ViewFooter>
  </Panel>
);

/* ---------- right column ---------- */
const Column = styled.div`display: flex; flex-direction: column; gap: 4px; min-height: 0;`;
const AudioBody = styled.div`
  display: flex; height: 174px; padding: 8px 8px 0 9px; color: #929292;
`;
const Meter = styled.div`
  width: 27px;
  &::before { content: ''; display: block; height: 5px; background: #000; border: 1px solid #444; margin-bottom: 2px; }
`;
const MeterBar = styled.div`
  height: 153px; border: 1px solid #4a4a4a;
  background: linear-gradient(90deg, transparent 12px, #000 12px 13px, transparent 13px),
    linear-gradient(#6d2020, #6b3a1e 12%, #62601f 20%, #1e6a1e 37%, #1e5a1e 50%, #1e401e 70%, #1e391e);
`;
const Scale = styled.div<{ $w: number; $top: number; $bottom: number; $pad: number }>`
  display: flex; flex-direction: column; justify-content: space-between; align-items: flex-start;
  width: ${p => p.$w}px; margin: ${p => p.$top}px 0 ${p => p.$bottom}px; padding-left: ${p => p.$pad}px;
  span { white-space: pre; }
`;
const Fader = styled.label<{ $big?: boolean }>`
  display: flex; flex-direction: column; align-items: center; gap: 9px; width: 24px; padding-top: ${p => (p.$big ? 15 : 12)}px; color: #5a5a5a;
  input {
    appearance: none; writing-mode: vertical-lr; width: ${p => (p.$big ? 20 : 14)}px; height: ${p => (p.$big ? 119 : 125)}px;
    background: linear-gradient(#3e3e3e, #3e3e3e) center / 2px 100% no-repeat;
  }
  input::-webkit-slider-thumb {
    appearance: none; width: ${p => (p.$big ? 20 : 14)}px; height: ${p => (p.$big ? 20 : 14)}px; border-radius: 50%;
    background: ${c.panel}; border: 2px solid #484848; box-shadow: 0 0 0 2px ${c.panel};
  }
`;
const PanelTitle = styled.h2<{ $h: number }>`
  flex: none; display: flex; align-items: center; gap: 10px; height: ${p => p.$h}px; margin: 0; padding-left: 12px;
  font-size: 11px; font-weight: 400; color: ${c.bright};
`;
const Transport = styled.div`
  display: flex; height: 28px; margin: 0 6px; padding: 0 44px 0 40px; align-items: center; justify-content: space-between;
  border-bottom: 1px solid #343434;
`;
const Shortcut = styled.div`
  display: flex; flex-direction: column; gap: 5px; padding: 6px; height: 48px;
`;
const Section = styled.div<{ $pad?: number }>`
  margin: 0 6px; padding: ${p => p.$pad ?? 2}px 0; border-top: 1px solid #343434;
`;
const Props = styled.div`
  display: grid; grid-template-columns: 24px 44px 38px 30px 45px 1fr; align-items: center; height: 21px;
`;
const Value = styled.button<{ $off?: boolean }>`
  text-align: left; white-space: nowrap; color: ${p => (p.$off ? '#555' : c.text)};
`;
const FontRows = styled.div`
  display: flex; justify-content: space-between; padding: 10px 6px 5px;
`;
const Stack = styled.div<{ $gap: number }>`display: flex; flex-direction: column; gap: ${p => p.$gap}px;`;
const Colors = styled.div`position: relative; width: 44px; height: 44px;`;
const Fill = styled.button`
  position: absolute; left: 0; top: 0; width: 30px; height: 30px; background: #000080; border: 1px solid #000;
`;
const StrokeSwatch = styled.button`
  position: absolute; left: 13px; top: 13px; width: 30px; height: 30px; border: 1px solid #000;
  background: linear-gradient(to bottom right, transparent 48%, #c0282c 48% 53%, transparent 53%), #fff;
`;
const Hole = styled.i`position: absolute; left: 22px; top: 22px; width: 12px; height: 12px; background: #222; border: 1px solid #000;`;
const NoFill = styled.button`
  position: absolute; left: 1px; top: 31px; width: 11px; height: 11px; border: 1px solid #555;
  background: linear-gradient(to bottom right, transparent 44%, #c0282c 44% 56%, transparent 56%), #fff;
`;
const SwapSlot = styled.span`position: absolute; left: 31px; top: 1px; color: #b4b4b4;`;
const BlackWhite = styled.button`
  width: 20px; height: 17px; border: 1px solid #999; background: linear-gradient(#000 50%, #fff 50%);
`;
const Styles = styled.div`
  display: grid; grid-template-columns: repeat(6, 27px); align-items: center; height: 33px; margin: 0 6px; padding-left: 17px;
  border-top: 1px solid #343434;
  button { font: 15px/18px "Liberation Serif", serif; color: #b8b8b8; }
  sup, sub { font-size: 9px; line-height: 0; }
`;
const Small = styled.span`font-size: 11px;`;
const Glyph = styled.span<{ $big?: boolean; $box?: boolean }>`
  display: flex; align-items: baseline; justify-content: center; font-size: ${p => (p.$big ? 18 : 12)}px; line-height: 11px; color: ${p => (p.$box ? c.panel : '#b4b4b4')};
  font-family: ${p => (p.$big ? '"Liberation Serif", serif' : 'Lato, sans-serif')}; font-weight: ${p => (p.$big || p.$box ? 700 : 400)};
  background: ${p => (p.$box ? '#b4b4b4' : 'none')}; width: 18px;
  small { font-size: 12px; }
`;
const IconStack = styled.span`display: flex; flex-direction: column; align-items: center; width: 18px; color: #b4b4b4;`;

const Amount = ({ n, unit, off }: { n?: string; unit?: string; off?: boolean }) => (
  <Value $off={off}>{n !== undefined && <Blue>{n}</Blue>}{unit && (n ? ' ' : '')}{unit}</Value>
);
const Arrow = () => <Icon name="triDown" w={7} h={7} />;
const Fg = styled.span`color: #b4b4b4; display: flex;`;

const RightColumn = () => (
  <Column>
    <Panel style={{ flex: 'none' }}>
      <Tabs $pad={11}>
        <Tab>Info</Tab><Cell $w={38} /><Tab $on>Audio<Icon name="menu" w={9} h={9} /></Tab>
      </Tabs>
      <AudioBody>
        <Meter><MeterBar /></Meter>
        <Scale $w={45} $top={7} $bottom={6} $pad={7}>
          {[' 0.0', '-3.0', '-6.0', '-9.0', '-12.0', '-15.0', '-18.0', '-21.0', '-24.0'].map(t => <span key={t}>{t}</span>)}
        </Scale>
        <Fader><input type="range" defaultValue="50" aria-label="Left level" />0</Fader>
        <Fader $big><input type="range" defaultValue="50" aria-label="Master level" /></Fader>
        <Fader><input type="range" defaultValue="50" aria-label="Right level" />0</Fader>
        <Scale $w={46} $top={6} $bottom={21} $pad={2}>
          {[' 12.0 dB', ' 9.0', ' 6.0', ' 3.0', ' 0.0 dB', '-3.0', '-6.0', '-9.0', '-12.0 dB'].map(t => <span key={t}>{t}</span>)}
        </Scale>
      </AudioBody>
    </Panel>
    <Panel style={{ flex: 'none' }}>
      <PanelTitle $h={28}>Preview<Icon name="menu" w={9} h={9} /></PanelTitle>
      <Transport>
        {['first', 'prev', 'play', 'next', 'last'].map(n => (
          <IconButton key={n} $w={13} aria-label={n}><Icon name={n} w={n === 'play' ? 10 : 13} h={11} /></IconButton>
        ))}
      </Transport>
      <Shortcut>
        <span>Shortcut</span>
        <Row $gap={8}><Select label="Shortcut" value="Spacebar" $w={169} $h={19} /><Fg><Icon name="reset" w={14} h={13} /></Fg></Row>
      </Shortcut>
    </Panel>
    <Panel style={{ flex: 1 }}>
      <Tabs $pad={8}>
        <Tab>Libraries</Tab><Cell $w={39} /><Tab $on>Character<Icon name="menu" w={9} h={9} /></Tab>
        <Spacer /><Overflow aria-label="More panels"><Icon name="more" w={11} h={9} /></Overflow>
      </Tabs>
      <FontRows>
        <Stack $gap={6}>
          <Select label="Font family" value="Arial Black" $w={122} $split /><Select label="Font style" value="Regular" $w={122} $split />
        </Stack>
        <Stack $gap={6}>
          <IconButton $w={20} aria-label="Eyedropper"><Icon name="dropper" w={17} h={16} /></IconButton>
          <BlackWhite aria-label="Black and white" />
        </Stack>
        <Colors>
          <StrokeSwatch aria-label="Stroke colour" /><Hole /><Fill aria-label="Fill colour" /><NoFill aria-label="No fill" />
          <SwapSlot><Icon name="swap" w={12} /></SwapSlot>
        </Colors>
      </FontRows>
      <Section>
        <Props><Glyph $big><small>T</small>T</Glyph><Amount n="142" unit="px" /><Arrow /><Fg><Icon name="leading" w={17} h={18} /></Fg><Amount n="Auto" /><Arrow /></Props>
        <Props>
          <IconStack><Glyph>V/A</Glyph><Icon name="arrowL" w={8} h={5} /></IconStack><Amount unit="Metrics" off /><Arrow />
          <IconStack><Glyph $box>VA</Glyph><Icon name="arrowH" w={16} h={6} /></IconStack><Amount n="0" /><Arrow />
        </Props>
      </Section>
      <Section>
        <Row style={{ height: 26 }}>
          <Cell $w={24} $start><Fg><Icon name="strokeW" w={16} h={13} /></Fg></Cell><Cell $w={44} $start><Amount n="-" unit="px" /></Cell>
          <Cell $w={12} $start><Arrow /></Cell><Select label="Stroke order" value="" $w={114} />
        </Row>
      </Section>
      <Section $pad={5}>
        <Props><Fg><Icon name="vscale" w={18} h={15} /></Fg><Amount n="100" unit="%" /><Arrow /><Fg><Icon name="arrowsH" w={17} h={17} /></Fg><Amount n="100" unit="%" /><Arrow /></Props>
        <Props><Fg><Icon name="baseline" w={16} h={14} /></Fg><Amount n="0" unit="px" /><Arrow /><Fg><Icon name="tsume" w={15} h={15} /></Fg><Amount n="0" unit="%" /><Arrow /></Props>
      </Section>
      <Styles>
        <button><b>T</b></button><button><em>T</em></button><button>TT</button>
        <button>T<Small>T</Small></button><button>T<sup>1</sup></button><button>T<sub>1</sub></button>
      </Styles>
      <Row style={{ height: 23, paddingLeft: 11 }}>
        <Cell $w={98} $start><Check><input type="checkbox" defaultChecked />Ligatures</Check></Cell>
        <Check><input type="checkbox" />Hindi Digits</Check>
      </Row>
    </Panel>
  </Column>
);

/* ---------- timeline ---------- */
const Body = styled.div`
  flex: 1; min-height: 0; display: grid; grid-template-columns: 606px 1fr 17px;
`;
const Left = styled.div`display: flex; flex-direction: column;`;
const Tools = styled.div`
  flex: none; display: flex; align-items: center; height: 34px; padding-left: 10px;
`;
const Timecode = styled.div`
  width: 89px; color: ${c.blueText};
  b { display: block; font-size: 15px; line-height: 16px; padding-left: 3px; }
  small { display: block; font-size: 11px; line-height: 12px; color: #1f6699; }
`;
const LayerTable = styled(DataTable)`
  thead tr { height: 19px; }
  td { height: 17px; border-bottom: 1px solid #1e1e1e; }
`;
const LayerRow = styled.tr<{ $on?: boolean }>`
  background: ${p => (p.$on ? '#484848' : '#2f2f2f')};
`;
const Switches = styled.div`display: flex; align-items: center; height: 16px; padding-left: 3px;`;
const Switch = styled.button<{ $box?: boolean; $on?: boolean }>`
  display: grid; place-items: center; width: 13px; height: 14px; margin: 0 1px; color: #b8b8b8;
  background: ${p => (p.$box ? (p.$on ? '#363636' : '#202020') : 'none')};
`;
const LayerName = styled.span<{ $on?: boolean }>`
  flex: 1; height: 16px; margin-left: 1px; padding-left: 3px; line-height: 16px; font-weight: 700;
  background: ${p => (p.$on ? '#9f9f9f' : 'none')}; color: ${p => (p.$on ? '#222' : c.text)};
`;
const Tracks = styled.div`
  position: relative; display: flex; flex-direction: column; padding-top: 3px; border-left: 1px solid #000; overflow: hidden;
`;
const NavBar = styled.div`
  flex: none; display: flex; justify-content: space-between; height: 11px; background: #666; border: solid #000; border-width: 1px 0;
`;
const NavEnd = styled.i<{ $r?: boolean }>`
  width: 8px; background: ${c.blue}; border-radius: ${p => (p.$r ? '0 5px 5px 0' : '5px 0 0 5px')};
  border-${p => (p.$r ? 'left' : 'right')}: 1px solid #1a1a1a;
`;
const Ruler = styled.div`
  flex: none; display: flex; justify-content: space-between; height: 19px; padding: 0 8px 0 7px; color: #929292;
`;
const Tick = styled.span`
  display: flex; flex-direction: column; align-items: center; justify-content: space-between; width: 0; white-space: nowrap;
  &::after { content: ''; width: 1px; height: 5px; background: #888; }
`;
const WorkArea = styled.div`
  flex: none; display: flex; justify-content: space-between; height: 17px; background: #5e5e5e; border: solid #000; border-width: 1px 0;
  i { width: 6px; background: ${c.blue}; border-radius: 3px; }
`;
const Cache = styled.div`
  flex: none; height: 4px; margin: 0 8px 0 7px; background: #24b134; border-bottom: 1px solid #000;
`;
const Track = styled.div<{ $on?: boolean }>`
  flex: none; height: 17px; padding: 0 8px 0 7px; background: ${p => (p.$on ? '#484848' : '#353535')}; border-bottom: 1px solid #1e1e1e;
  div {
    height: 16px; background: ${p => (p.$on ? 'linear-gradient(#b24a4a, #964040)' : '#763a3a')};
    border-top: 1px solid ${p => (p.$on ? '#d8a9a9' : '#763a3a')};
  }
`;
const Empty = styled.div`flex: 1; background: #353535;`;
const Playhead = styled.svg`position: absolute; left: 0; top: 3px; width: 15px; height: 100%;`;
const Markers = styled.div`
  display: flex; flex-direction: column; align-items: center; gap: 7px; padding-top: 36px; color: #b4b4b4; border-left: 1px solid #000;
`;
const TimelineFooter = styled(Footer)`
  height: 19px; padding-left: 3px; padding-bottom: 1px; color: ${c.text};
`;
const ZoomRange = styled.input`
  appearance: none; width: 50px; height: 12px; background: linear-gradient(#4a4a4a, #4a4a4a) center / 100% 2px no-repeat;
  &::-webkit-slider-thumb { appearance: none; width: 10px; height: 11px; border: 2px solid #a0a0a0; border-radius: 50%; background: ${c.panel}; }
`;

const layers = [
  { name: 'Third layer of text', on: true },
  { name: 'My text too', on: true },
  { name: 'my text', on: false },
];
const seconds = Array.from({ length: 21 }, (_, i) => (i === 0 ? '0:00s' : `${String(i * 2).padStart(2, '0')}s`));
const toolIcons: [string, number][] = [['compFlow', 36], ['draft3d', 32], ['shy', 34], ['frameBlend', 19], ['motionBlur', 33], ['graph', 36]];

const TimelinePanel = () => (
  <Panel>
    <Tabs $pad={7} style={{ height: 29 }}>
      <Tab>
        <Icon name="close" w={8} /><Swatch $c={c.tan} /><span style={{ color: c.bright }}>text</span><Icon name="menu" w={9} h={9} />
      </Tab>
    </Tabs>
    <Body>
      <Left>
        <Tools>
          <Timecode><b>0:00:00:00</b><small>00000 (30.00 fps)</small></Timecode>
          <SearchBox $h={20} style={{ width: 306 }}><Icon name="searchMenu" w={17} h={14} /><input aria-label="Search layers" /></SearchBox>
          <Cell $w={6} />
          {toolIcons.map(([n, w]) => <IconButton key={n} $w={w} aria-label={n}><Icon name={n} w={16} /></IconButton>)}
        </Tools>
        <LayerTable>
          <colgroup>
            <col style={{ width: 67 }} /><col style={{ width: 32 }} /><col style={{ width: 33 }} /><col style={{ width: 165 }} /><col style={{ width: 137 }} /><col />
          </colgroup>
          <thead>
            <tr>
              <th><Switches>{['eye', 'speaker', 'dot', 'lock'].map(n => <Switch key={n} aria-label={n}><Icon name={n} w={n === 'lock' ? 10 : 12} h={12} /></Switch>)}</Switches></th>
              <th><Head $pad={14}><Icon name="tag" w={12} /></Head></th>
              <th><Head>#</Head></th>
              <th><Head>Source Name</Head></th>
              <th>
                <Head $pad={2}>
                  <Row>
                    {['shySm', 'sun', 'quality', 'fx', 'film', 'motionBlur', 'adjust', 'cube'].map(n => (
                      <Switch key={n} aria-label={n}>{n === 'fx' ? <i>fx</i> : <Icon name={n} w={12} />}</Switch>
                    ))}
                  </Row>
                </Head>
              </th>
              <th><Row><Head style={{ width: 156 }}>Parent &amp; Link</Head><Head /></Row></th>
            </tr>
          </thead>
          <tbody>
            {layers.map((l, i) => (
              <LayerRow key={l.name} $on={l.on}>
                <td>
                  <Switches>
                    <Switch $box $on={l.on} aria-label="Visible"><Icon name="eye" w={11} /></Switch>
                    <Cell $w={15} /><Switch $box $on={l.on} aria-label="Solo" /><Switch $box $on={l.on} aria-label="Lock" />
                  </Switches>
                </td>
                <td><Row><Cell $w={18}><Icon name="chevron" w={9} /></Cell><Swatch $c={c.red} $s={12} /></Row></td>
                <td><Cell $w={21}><b>{i + 1}</b></Cell></td>
                <td><Row><Cell $w={18}><Icon name="type" w={10} h={11} /></Cell><LayerName $on={l.on}>{l.name}</LayerName></Row></td>
                <td>
                  <Switches>
                    <Switch $box $on={l.on} aria-label="Shy"><Icon name="shySm" w={12} /></Switch>
                    <Switch $box $on={l.on} aria-label="Collapse" style={{ color: '#888' }}><Icon name="sun" w={10} /></Switch>
                    <Switch $box $on={l.on} aria-label="Quality"><Icon name="slash" w={12} /></Switch>
                    <Cell $w={30} />
                    <Switch $box $on={l.on} aria-label="Motion blur" /><Switch $box $on={l.on} aria-label="Adjustment" /><Switch $box $on={l.on} aria-label="3D" />
                  </Switches>
                </td>
                <td><Row><Cell $w={24}><Icon name="spiral" w={12} /></Cell><Select label={`Parent of ${l.name}`} value="None" $w={128} $h={15} /></Row></td>
              </LayerRow>
            ))}
          </tbody>
        </LayerTable>
      </Left>
      <Tracks>
        <NavBar><NavEnd /><NavEnd $r /></NavBar>
        <Ruler>{seconds.map(s => <Tick key={s}>{s}</Tick>)}</Ruler>
        <WorkArea><i /><i /></WorkArea>
        <Cache />
        {layers.map(l => <Track key={l.name} $on={l.on}><div /></Track>)}
        <Empty />
        <Playhead><path d="M1 17h12v5l-5.500 8L1 22z" fill={c.blue} /><path d="M7 0h1v2000H7z" fill={c.blue} /></Playhead>
      </Tracks>
      <Markers><Icon name="marker" w={13} h={14} /><Icon name="compMarker" w={14} h={13} /></Markers>
    </Body>
    <TimelineFooter>
      <Fg style={{ color: c.blue }}><Cell $w={18}><Icon name="layers" w={13} /></Cell></Fg>
      <Cell $w={18}><Icon name="modes" w={12} h={13} /></Cell>
      <Cell $w={18}><Icon name="braces" w={12} h={13} /></Cell>
      <Cell $w={243} />
      <Button $w={133} $h={15}>Toggle Switches / Modes</Button>
      <Cell $w={179} />
      <Icon name="mountainSm" w={11} h={11} /><Cell $w={10} />
      <ZoomRange type="range" defaultValue="0" aria-label="Zoom" />
      <Cell $w={10} /><Icon name="mountainLg" w={17} h={12} />
    </TimelineFooter>
  </Panel>
);

/* ---------- paragraph ---------- */
const AlignRow = styled.div`
  display: flex; height: 31px; width: 181px; margin-left: 7px; padding-bottom: 3px; align-items: center; gap: 5px; border-bottom: 1px solid #343434;
`;
const AlignIcon = ({ kind }: { kind: number }) => {
  const widths = [[15, 10], [15, 10], [15, 10], [14, 10], [14, 10], [14, 10], [14, 14]][kind];
  return (
    <svg width="15" height="14" fill="currentColor" aria-hidden="true">
      {[0, 1, 2, 3, 4].map(i => {
        const w = kind > 2 && i < 4 ? widths[0] : widths[i % 2 === 0 ? 1 : 0];
        const x = [0, (15 - w) / 2, 15 - w, 0, (15 - w) / 2, 15 - w, 0][kind];
        return <rect key={i} x={x} y={i * 3} width={w} height="1.2" />;
      })}
    </svg>
  );
};
const ParaGrid = styled.div`
  display: grid; grid-template-columns: 21px 50px 23px 43px 22px 1fr; align-items: center; padding: 1px 0 0 7px;
  grid-auto-rows: 18px;
`;

const ParagraphPanel = () => (
  <Panel>
    <PanelTitle $h={29}>Paragraph<Icon name="menu" w={9} h={9} /></PanelTitle>
    <AlignRow>
      {[0, 1, 2, 3, 4, 5, 6].map(k => (
        <IconButton key={k} $w={20} $on={k === 0} $dim={k > 2} aria-label={`Align ${k + 1}`} style={{ marginLeft: k === 3 || k === 6 ? 5 : 0 }}><AlignIcon kind={k} /></IconButton>
      ))}
    </AlignRow>
    <ParaGrid>
      <Fg><Icon name="indentL" w={16} h={15} /></Fg><Amount n="0" unit="px" />
      <Fg><Icon name="spaceBefore" w={16} h={15} /></Fg><Amount n="0" unit="px" />
      <Fg><Icon name="firstLine" w={16} h={15} /></Fg><Amount n="0" unit="px" />
      <Fg><Icon name="indentR" w={16} h={15} /></Fg><Amount n="0" unit="px" />
      <Fg><Icon name="spaceAfter" w={16} h={15} /></Fg><Amount n="0" unit="px" />
      <IconButton $w={20} $on aria-label="Left to right"><Icon name="ltr" w={16} h={13} /></IconButton>
      <IconButton $w={22} aria-label="Right to left"><Icon name="rtl" w={16} h={13} /></IconButton>
    </ParaGrid>
  </Panel>
);

export default function App() {
  return (
    <Shell>
      <Global />
      <TitleBar>
        <Row $gap={7}><Light aria-label="Close"><i /></Light><Light aria-label="Minimise" /><Light aria-label="Zoom" /></Row>
        <h1>Adobe After Effects CC 2019 - /Volumes/12TB My Book Duo/AE Sandbox/text issue.aep *</h1>
      </TitleBar>
      <Frame>
        <MainToolbar />
        <Upper><ProjectPanel /><CompositionPanel /><RightColumn /></Upper>
        <Lower><TimelinePanel /><ParagraphPanel /></Lower>
      </Frame>
    </Shell>
  );
}
